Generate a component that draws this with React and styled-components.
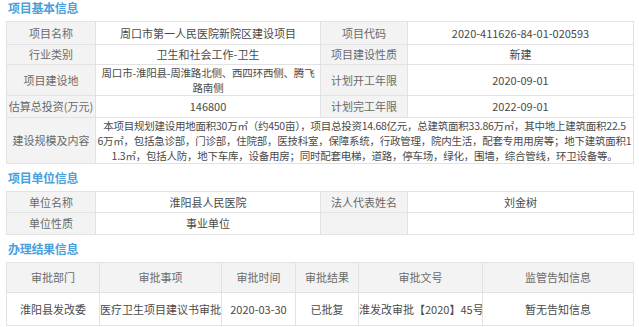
import React from "react";
import styled, { createGlobalStyle } from "styled-components";

const Global = createGlobalStyle`
  html, body { margin: 0; padding: 0; background: #ffffff; }
  body { font-family: "Noto Sans CJK SC", "Noto Sans", sans-serif; }
`;

const Page = styled.div`
  width: 627px;
  padding: 0 0 0 6px;
`;

const Title = styled.div`
  margin-top: ${(p) => (p.$first ? 0 : 6)}px;
  height: 21px;
  line-height: 16px;
  padding-left: 2px;
  font-size: 12px;
  font-weight: 700;
  color: #4aa0dc;
  letter-spacing: -0.3px;
  box-sizing: border-box;
`;

const Table = styled.table`
  width: 627px;
  border-collapse: collapse;
  table-layout: fixed;
  font-size: 11px;
`;

const Col = styled.col`
  width: ${(p) => p.$w}px;
`;

const Cell = styled.td`
  border: 1px solid #e2e2e2;
  text-align: center;
  vertical-align: middle;
  padding: 0;
  height: ${(p) => p.$h || 20}px;
  line-height: 15px;
  color: ${(p) => (p.$label ? "#6a6a6a" : "#4a4a4a")};
  background: ${(p) => (p.$label ? "#f3f3f3" : "#ffffff")};
  white-space: nowrap;
  overflow: hidden;
`;

const Tight = styled.div`
  font-size: ${(p) => p.$size || 11}px;
  line-height: 15px;
  letter-spacing: ${(p) => p.$ls || 0}px;
`;

const Cols = ({ widths }) => (
  <colgroup>
    {widths.map((w, i) => (
      <Col key={i} $w={w} />
    ))}
  </colgroup>
);

const Row = ({ h, cells }) => (
  <tr>
    {cells.map((c, i) => (
      <Cell key={i} $h={h} $label={i % 2 === 0}>
        {c}
      </Cell>
    ))}
  </tr>
);

const W4 = [89, 225, 87, 226];
const W6 = [93, 122, 74, 63, 124, 151];

export default function App() {
  return (
    <Page>
      <Global />
      <Title $first>项目基本信息</Title>
      <Table>
        <Cols widths={W4} />
        <tbody>
          <Row h={22} cells={["项目名称", "周口市第一人民医院新院区建设项目", "项目代码", "2020-411626-84-01-020593"]} />
          <Row h={19} cells={["行业类别", "卫生和社会工作-卫生", "项目建设性质", "新建"]} />
          <Row
            h={29}
            cells={[
              "项目建设地",
              <Tight $size={10.5} $ls={-0.2}>
                周口市-淮阳县-周淮路北侧、西四环西侧、腾飞
                <br />
                路南侧
              </Tight>,
              "计划开工年限",
              "2020-09-01",
            ]}
          />
          <Row h={21} cells={["估算总投资(万元)", "146800", "计划完工年限", "2022-09-01"]} />
          <tr>
            <Cell $label $h={44}>建设规模及内容</Cell>
            <Cell $h={44} colSpan={3}>
              <Tight $size={10.5} $ls={-0.25}>
                本项目规划建设用地面积30万㎡（约450亩），项目总投资14.68亿元，总建筑面积33.86万㎡，其中地上建筑面积22.5
                <br />
                6万㎡，包括急诊部，门诊部，住院部，医技科室，保障系统，行政管理，院内生活，配套专用用房等；地下建筑面积1
                <br />
                1.3㎡，包括人防，地下车库，设备用房；同时配套电梯，道路，停车场，绿化，围墙，综合管线，环卫设备等。
              </Tight>
            </Cell>
          </tr>
        </tbody>
      </Table>

      <Title>项目单位信息</Title>
      <Table>
        <Cols widths={W4} />
        <tbody>
          <Row h={20} cells={["单位名称", "淮阳县人民医院", "法人代表姓名", "刘金树"]} />
          <Row h={21} cells={["单位性质", "事业单位", "", ""]} />
        </tbody>
      </Table>

      <Title>办理结果信息</Title>
      <Table>
        <Cols widths={W6} />
        <tbody>
          <tr>
            {["审批部门", "审批事项", "审批时间", "审批结果", "审批文号", "监管告知信息"].map((t) => (
              <Cell key={t} $label $h={29}>{t}</Cell>
            ))}
          </tr>
          <tr>
            {["淮阳县发改委", "医疗卫生项目建议书审批", "2020-03-30", "已批复", "淮发改审批【2020】45号", "暂无告知信息"].map((t) => (
              <Cell key={t} $h={32}>{t}</Cell>
            ))}
          </tr>
        </tbody>
      </Table>
    </Page>
  );
}
